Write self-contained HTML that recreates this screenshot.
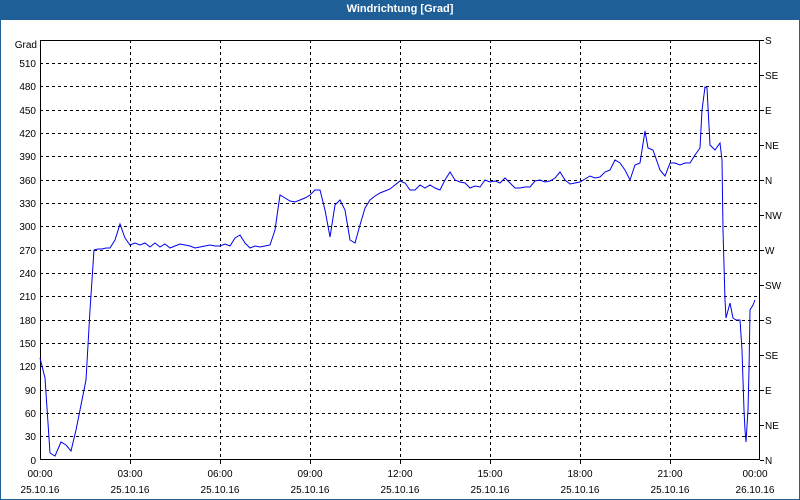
<!DOCTYPE html>
<html><head><style>
body{margin:0;width:800px;height:500px;background:#fff;overflow:hidden;font-family:"Liberation Sans",sans-serif;}
.t{position:absolute;left:0;top:0;width:800px;height:20px;background:#1e5f97;color:#fff;font-size:11px;font-weight:bold;text-align:center;line-height:19px;}
.b{position:absolute;left:0;top:20px;width:798px;height:479px;border:1px solid #1e5f97;border-top:0;}
</style></head><body>
<div class="t">Windrichtung [Grad]</div>
<div class="b"></div>
<svg style="position:absolute;left:0;top:0" width="800" height="500" font-family="Liberation Sans, sans-serif" font-size="10" fill="#000">
<g stroke="#000" stroke-dasharray="3,3" stroke-width="1">
<path d="M40 63.5H760M40 86.5H760M40 110.5H760M40 133.5H760M40 156.5H760M40 180.5H760M40 203.5H760M40 226.5H760M40 250.5H760M40 273.5H760M40 296.5H760M40 320.5H760M40 343.5H760M40 366.5H760M40 390.5H760M40 413.5H760M40 436.5H760"/>
<path d="M130.5 40V460M220.5 40V460M310.5 40V460M400.5 40V460M490.5 40V460M580.5 40V460M670.5 40V460"/>
</g>
<rect x="40.5" y="40.5" width="719" height="419" fill="none" stroke="#000"/>
<g stroke="#000"><path d="M760 40.5h4M760 75.5h4M760 110.5h4M760 145.5h4M760 180.5h4M760 215.5h4M760 250.5h4M760 285.5h4M760 320.5h4M760 355.5h4M760 390.5h4M760 425.5h4M760 460.5h4M130.5 460v4M220.5 460v4M310.5 460v4M400.5 460v4M490.5 460v4M580.5 460v4M670.5 460v4"/></g>
<polyline fill="none" stroke="#0000ee" stroke-width="1" points="40,358 45,378 50,453 55,456 61,442 66,445 71,451 76,430 81,405 86,380 90,310 94,250 98,249 102,249 106,248 110,248 115,240 120,224 125,238 130,245 135,243 140,245 145,243 150,247 155,243 160,247 165,244 170,248 175,246 180,244 185,245 190,246 195,248 200,247 205,246 210,245 215,246 220,246 225,244 230,246 235,238 240,235 245,243 250,248 255,246 260,247 265,246 270,245 275,230 280,195 285,198 290,201 295,202 300,200 305,198 310,195 315,190 320,190 325,210 330,237 335,205 340,200 345,210 350,240 355,243 360,225 365,208 370,200 375,196 380,193 385,191 390,189 395,185 400,181 405,183 410,190 415,190 420,185 425,188 430,185 435,188 440,190 445,180 450,172 455,180 460,182 465,183 470,188 475,186 480,187 485,180 490,182 495,181 500,183 505,178 510,183 515,188 520,188 525,187 530,187 535,181 540,180 545,182 550,181 555,178 560,172 565,180 570,184 575,183 580,182 585,179 590,176 595,178 600,177 605,172 610,170 615,160 620,163 625,170 630,180 635,165 640,163 645,131 648,148 653,150 660,170 665,176 670,163 675,163 680,165 685,163 690,163 695,155 700,148 702,110 705,87 707,88 710,145 715,150 720,143 722,160 723,230 724,265 725,300 726,318 730,303 733,318 736,320 740,320 742,350 744,410 745,430 746,442 748,410 749,370 750,310 753,305 755,300"/>
<g text-anchor="end">
<text x="37" y="48">Grad</text>
<text x="36" y="67">510</text><text x="36" y="90">480</text><text x="36" y="114">450</text><text x="36" y="137">420</text><text x="36" y="160">390</text><text x="36" y="184">360</text><text x="36" y="207">330</text><text x="36" y="230">300</text><text x="36" y="254">270</text><text x="36" y="277">240</text><text x="36" y="300">210</text><text x="36" y="324">180</text><text x="36" y="347">150</text><text x="36" y="370">120</text><text x="36" y="394">90</text><text x="36" y="417">60</text><text x="36" y="440">30</text><text x="36" y="464">0</text>
</g>
<g>
<text x="765" y="44">S</text><text x="765" y="79">SE</text><text x="765" y="114">E</text><text x="765" y="149">NE</text><text x="765" y="184">N</text><text x="765" y="219">NW</text><text x="765" y="254">W</text><text x="765" y="289">SW</text><text x="765" y="324">S</text><text x="765" y="359">SE</text><text x="765" y="394">E</text><text x="765" y="429">NE</text><text x="765" y="464">N</text>
</g>
<g text-anchor="middle">
<text x="40" y="477">00:00</text><text x="130" y="477">03:00</text><text x="220" y="477">06:00</text><text x="310" y="477">09:00</text><text x="400" y="477">12:00</text><text x="490" y="477">15:00</text><text x="580" y="477">18:00</text><text x="670" y="477">21:00</text><text x="755" y="477">00:00</text>
<text x="40" y="493">25.10.16</text><text x="130" y="493">25.10.16</text><text x="220" y="493">25.10.16</text><text x="310" y="493">25.10.16</text><text x="400" y="493">25.10.16</text><text x="490" y="493">25.10.16</text><text x="580" y="493">25.10.16</text><text x="670" y="493">25.10.16</text><text x="755" y="493">26.10.16</text>
</g>
</svg>
</body></html>
